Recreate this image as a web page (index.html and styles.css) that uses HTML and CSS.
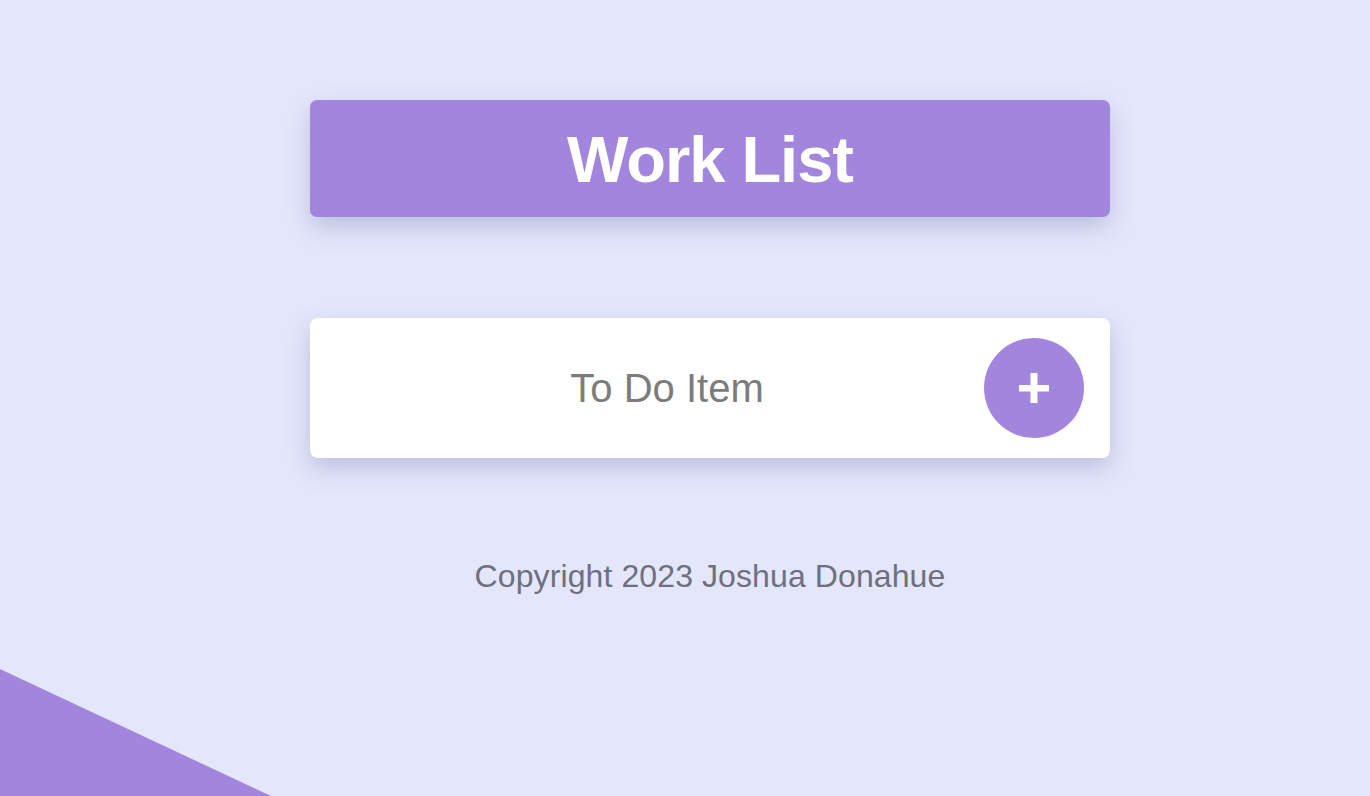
FILE: index.html
```html
<!DOCTYPE html>
<html lang="en">
<head>
<meta charset="utf-8">
<title>Work List</title>
<link rel="stylesheet" href="styles.css">
</head>
<body>
<main class="app">
  <header class="heading">
    <h1 class="heading-title">Work List</h1>
  </header>
  <form class="item-form">
    <input class="item-input" type="text" placeholder="To Do Item">
    <button class="add-btn" type="button" aria-label="Add">
      <svg width="30" height="30" viewBox="0 0 30 30" aria-hidden="true">
        <rect x="0" y="12" width="30" height="6.5" fill="#fff"/>
        <rect x="11.5" y="0" width="7" height="30" fill="#fff"/>
      </svg>
    </button>
  </form>
  <footer class="footer">Copyright 2023 Joshua Donahue</footer>
</main>
<div class="corner"></div>
</body>
</html>
```
FILE: styles.css
```css
html, body {
  margin: 0;
  padding: 0;
  height: 100%;
}
body {
  background: #e4e7fb;
  font-family: "Liberation Sans", Arial, sans-serif;
  overflow: hidden;
}
.app {
  width: 800px;
  margin: 0 auto;
  padding: 100px 0 0 50px;
  display: flex;
  flex-direction: column;
}
.heading {
  height: 117px;
  background: #a286de;
  border-radius: 7px;
  box-shadow: 0 10px 24px rgba(105, 108, 160, 0.32);
  display: flex;
  align-items: center;
  justify-content: center;
}
.heading-title {
  margin: 0;
  color: #fff;
  font-size: 65px;
  font-weight: 700;
  letter-spacing: -1px;
  line-height: 1;
  padding-top: 2px;
}
.item-form {
  margin-top: 101px;
  height: 140px;
  box-sizing: border-box;
  background: #fff;
  border-radius: 8px;
  box-shadow: 0 10px 24px rgba(105, 108, 160, 0.32);
  display: flex;
  align-items: center;
  padding: 0 26px 0 40px;
}
.item-input {
  flex: 1;
  min-width: 0;
  border: none;
  outline: none;
  background: transparent;
  text-align: center;
  font-family: "Liberation Sans", Arial, sans-serif;
  font-size: 40px;
  color: #777;
  padding: 0;
}
.item-input::placeholder {
  color: #7c7c7c;
  opacity: 1;
}
.add-btn {
  width: 100px;
  height: 100px;
  border-radius: 50%;
  border: none;
  background: #a286de;
  display: flex;
  align-items: center;
  justify-content: center;
  padding: 0;
  cursor: pointer;
}
.footer {
  margin-top: 100px;
  text-align: center;
  color: #6e7080;
  font-size: 32px;
  letter-spacing: 0.1px;
  line-height: 37px;
}
.corner {
  position: fixed;
  left: 0;
  bottom: 0;
  width: 271px;
  height: 127px;
  background: #a286de;
  clip-path: polygon(0 0, 100% 100%, 0 100%);
}
```
